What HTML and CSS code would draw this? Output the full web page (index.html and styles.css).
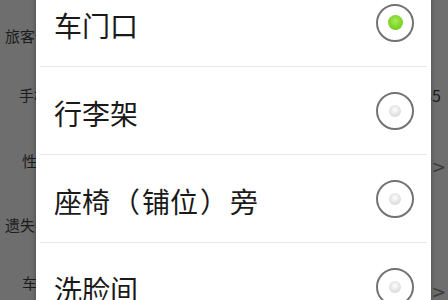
FILE: index.html
```html
<!DOCTYPE html>
<html lang="zh">
<head>
<meta charset="utf-8">
<link rel="stylesheet" href="styles.css">
</head>
<body>
<div class="page">
  <div class="bg-row section r1"><span class="lbl">旅客信息</span></div>
  <div class="bg-row r2"><span class="lbl indent">手机号</span><span class="val">135</span></div>
  <div class="bg-row r3"><span class="lbl indent2">性别</span><span class="val chev">&gt;</span></div>
  <div class="bg-row section r4"><span class="lbl">遗失物品</span></div>
  <div class="bg-row r5"><span class="lbl indent2">车厢</span><span class="val chev">&gt;</span></div>

  <div class="dialog">
    <div class="opt"><span class="opt-text">车门口</span><span class="radio on"></span></div>
    <div class="opt"><span class="opt-text">行李架</span><span class="radio"></span></div>
    <div class="opt"><span class="opt-text">座椅<span class="paren">（</span>铺位<span class="paren">）</span>旁</span><span class="radio"></span></div>
    <div class="opt"><span class="opt-text">洗脸间</span><span class="radio"></span></div>
  </div>
</div>
</body>
</html>
```
FILE: styles.css
```css
html, body {
  margin: 0;
  padding: 0;
}
body {
  width: 448px;
  height: 300px;
  overflow: hidden;
  background: #6c6c6c;
  font-family: "Noto Sans CJK SC", "Noto Sans", sans-serif;
}
.page {
  position: relative;
  width: 448px;
  height: 300px;
  overflow: hidden;
  display: flex;
  flex-direction: column;
  background: #6e6e6e;
}
.bg-row {
  display: flex;
  align-items: center;
  justify-content: space-between;
  color: #1c1c1c;
  font-size: 15px;
  line-height: 20px;
}
.r1 { height: 20px; margin-top: 26px; }
.r2 { height: 20px; margin-top: 39px; }
.r3 { height: 20px; margin-top: 46px; }
.r4 { height: 20px; margin-top: 44px; }
.r5 { height: 20px; margin-top: 38px; }
.lbl { padding-left: 5px; white-space: nowrap; }
.lbl.indent { padding-left: 19px; }
.lbl.indent2 { padding-left: 22px; }
.val {
  padding-right: 7px;
  color: #1c1c1c;
  font-size: 16px;
}
.chev {
  font-family: "DejaVu Sans", sans-serif;
  color: #3a3a3a;
  font-size: 17px;
  padding-right: 2px;
}
.r3 .chev { position: relative; top: 6px; }
.r5 .chev { position: relative; top: 9px; }

.dialog {
  position: absolute;
  left: 36px;
  top: -21px;
  width: 395px;
  background: #ffffff;
  box-shadow: 0 0 5px rgba(0, 0, 0, 0.35);
  display: flex;
  flex-direction: column;
}
.opt {
  height: 87px;
  display: flex;
  align-items: center;
  justify-content: space-between;
  border-bottom: 1px solid #e6e6e6;
  margin: 0 4px;
  padding: 0 13px 0 14px;
}
.opt-text {
  font-size: 28px;
  color: #1a1a1a;
  line-height: 32px;
  position: relative;
  top: 2px;
  white-space: nowrap;
}
.paren {
  margin: 0 2px;
}
.radio {
  width: 34px;
  height: 34px;
  border: 2px solid #737373;
  border-radius: 50%;
  display: flex;
  align-items: center;
  justify-content: center;
  box-sizing: content-box;
  flex: none;
}
.radio::after {
  content: "";
  width: 12px;
  height: 12px;
  border-radius: 50%;
  background: radial-gradient(circle at 50% 40%, #ffffff 0%, #e2e2e2 55%, #cfcfcf 100%);
}
.radio.on::after {
  width: 15px;
  height: 15px;
  background: radial-gradient(circle at 50% 40%, #a6ec55 0%, #7fd52a 55%, #66c018 100%);
}
```
